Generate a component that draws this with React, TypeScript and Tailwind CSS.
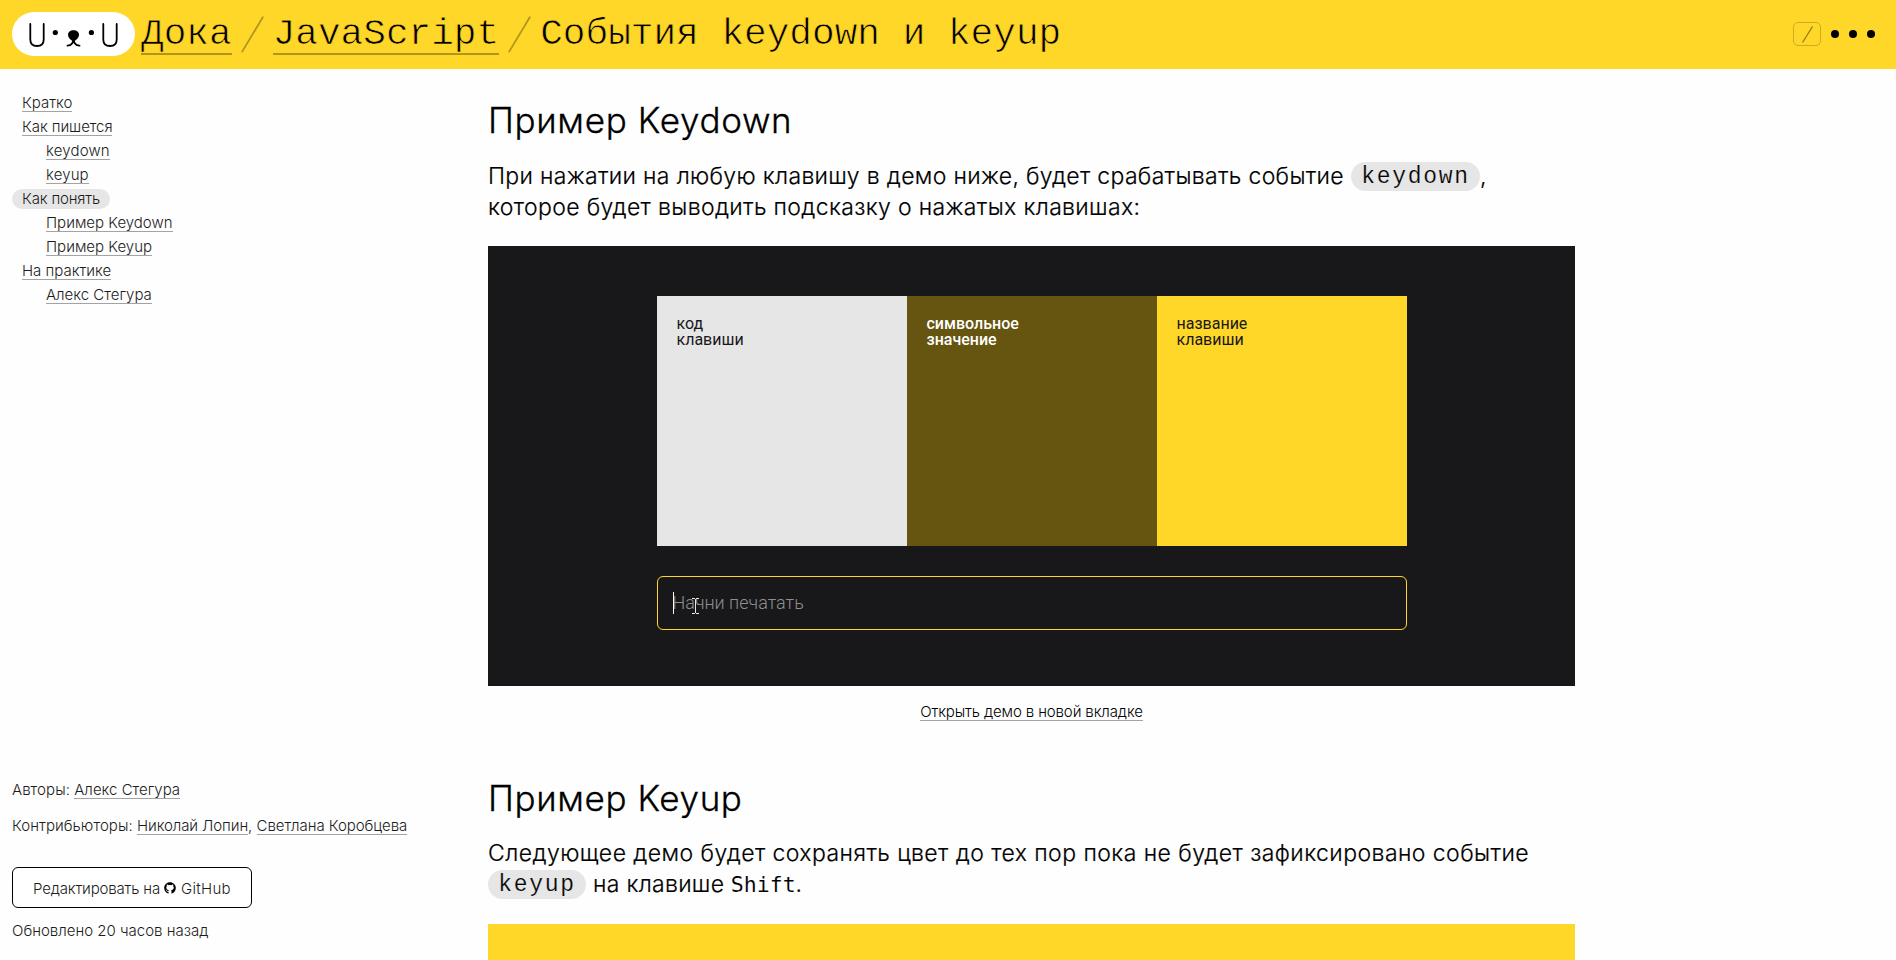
import type { ReactNode } from "react";
import { FaGithub } from "react-icons/fa";

type NavItem = { label: string; nested?: boolean; active?: boolean; tracking?: string };

const nav: NavItem[] = [
  { label: "Кратко" },
  { label: "Как пишется", tracking: "tracking-[-0.08px]" },
  { label: "keydown", nested: true, tracking: "tracking-[0.15px]" },
  { label: "keyup", nested: true, tracking: "tracking-[0.1px]" },
  { label: "Как понять", active: true, tracking: "tracking-[-0.16px]" },
  { label: "Пример Keydown", nested: true },
  { label: "Пример Keyup", nested: true },
  { label: "На практике" },
  { label: "Алекс Стегура", nested: true },
];

function Link({ children, className = "" }: { children: ReactNode; className?: string }) {
  return (
    <a className={`block h-[21px] border-b border-[#a3a3a3] leading-6 whitespace-nowrap ${className}`}>{children}</a>
  );
}

function Crumb({ children }: { children: ReactNode }) {
  return <a className="block h-[42px] border-b-2 border-[#b2961c] leading-[43px]">{children}</a>;
}

function Slash() {
  return (
    <svg className="mx-[9px] mt-[3px] h-[37px] w-[23px] shrink-0" viewBox="0 0 23 37" fill="none">
      <path d="M1.2 35.6 21.8 1.2" stroke="#b2961c" strokeWidth="1.8" strokeLinecap="round" />
    </svg>
  );
}

function Logo() {
  return (
    <svg className="mt-3 h-11 w-[123px] shrink-0" viewBox="0 0 123 44" fill="none">
      <rect width="123" height="44" rx="22" fill="#fff" />
      <g stroke="#000" strokeWidth="1.8" strokeLinecap="round">
        <path d="M18.3 12v15.5c0 4.200 2.500 6.500 6.700 6.500s6.700-2.300 6.700-6.500V12" />
        <path d="M91.300 12v15.500c0 4.200 2.500 6.500 6.700 6.500s6.700-2.300 6.700-6.500V12" />
        <path d="M61.500 26c0 4-1.800 7.500-6 7.700M61.500 26c0 4 1.800 7.500 6 7.700" />
      </g>
      <circle cx="43.300" cy="20.500" r="2.600" fill="#000" />
      <circle cx="79.400" cy="20.500" r="2.600" fill="#000" />
      <path d="M61.500 18.300c-3.400 0-5.500 1.900-5.500 4.500 0 2.800 2.700 5.300 5.500 6.700 2.800-1.400 5.500-3.900 5.500-6.700 0-2.600-2.100-4.500-5.500-4.500Z" fill="#000" />
    </svg>
  );
}

function Code({ children, className = "" }: { children: string; className?: string }) {
  return (
    <code
      className={`inline-block h-[29px] rounded-full bg-[#e6e6e6] text-center align-top font-['Liberation_Mono',monospace] text-[23px] leading-[30px] tracking-[1.7px] text-black [-webkit-text-stroke:0.2px_#e6e6e6] ${className}`}
    >
      {children}
    </code>
  );
}

function Tile({ children, className }: { children: ReactNode; className: string }) {
  return <div className={`size-[250px] pt-5 pl-5 text-base leading-4 ${className}`}>{children}</div>;
}

export default function App() {
  return (
    <div className="h-[960px] w-[1896px] overflow-hidden bg-[#fefefe] font-['Inter',sans-serif] font-light text-black">
      <header className="flex h-[69px] bg-[#ffd729] pl-3">
        <Logo />
        <div className="ml-1.5 flex pt-[13px] font-['Liberation_Mono',monospace] text-[37.75px] font-normal whitespace-pre [-webkit-text-stroke:0.75px_#ffd729]">
          <Crumb>Дока</Crumb>
          <Slash />
          <Crumb>JavaScript</Crumb>
          <Slash />
          <h1 className="leading-[43px]">События keydown и keyup</h1>
        </div>
        <div className="mt-[22px] ml-auto flex h-6 items-center pr-[21px]">
          <svg className="h-6 w-7" viewBox="0 0 28 24" fill="none">
            <rect x=".5" y=".5" width="27" height="23" rx="4.500" stroke="#ccac21" />
            <path d="M9.500 20.500 19.500 4.500" stroke="#8f7817" strokeWidth="1.300" />
          </svg>
          <div className="ml-2.5 flex gap-2.5">
            <i className="size-2 rounded-full bg-black" />
            <i className="size-2 rounded-full bg-black" />
            <i className="size-2 rounded-full bg-black" />
          </div>
        </div>
      </header>

      <div className="flex h-[891px]">
        <aside className="flex w-[488px] shrink-0 flex-col pt-[22px] pl-3 text-[15px] text-[#1c1c1c]">
          <nav>
            {nav.map((item) => (
              <div key={item.label} className={`flex h-6 ${item.active ? "" : item.nested ? "pl-[34px]" : "pl-2.5"}`}>
                {item.active ? (
                  <a className={`mt-0.5 h-5 rounded-full bg-[#e6e6e6] px-2.5 leading-5 ${item.tracking}`}>{item.label}</a>
                ) : (
                  <Link className={item.tracking}>{item.label}</Link>
                )}
              </div>
            ))}
          </nav>
          <div className="mt-[471px] flex h-6 leading-6 whitespace-pre">
            <span className="tracking-[0.06px]">Авторы: </span>
            <Link>Алекс Стегура</Link>
          </div>
          <div className="mt-3 flex h-6 leading-6 whitespace-pre">
            <span className="tracking-[0.05px]">Контрибьюторы: </span>
            <Link className="tracking-[-0.1px]">Николай Лопин</Link>
            <span>, </span>
            <Link className="tracking-[-0.05px]">Светлана Коробцева</Link>
          </div>
          <button className="mt-[29px] flex h-[41px] w-60 items-center rounded-md border border-black bg-white pt-1 pl-5 whitespace-nowrap">
            <span className="w-[131px] text-left tracking-[-0.16px]">Редактировать на</span>
            <FaGithub className="-mt-1 size-3 text-black" />
            <span className="ml-[5px] tracking-[0.3px]">GitHub</span>
          </button>
          <p className="mt-[11px] leading-6">Обновлено 20 часов назад</p>
        </aside>

        <main className="flex w-[1087px] flex-col pt-[30px]">
          <h2 className="text-[35px] leading-[42px] tracking-[0.65px] [-webkit-text-stroke:0.3px_#000]">Пример Keydown</h2>
          <p className="mt-5 h-[62px] text-[23px] leading-[31px] whitespace-nowrap [-webkit-text-stroke:0.2px_#000]">
            <span className="tracking-[0.33px]">При нажатии на любую клавишу в демо ниже, будет срабатывать событие</span>
            <Code className="mt-px ml-[7px] w-[129px]">keydown</Code>,
            <br />
            <span className="tracking-[0.35px]">которое будет выводить подсказку о нажатых клавишах:</span>
          </p>

          <section className="mt-[23px] flex h-[440px] shrink-0 flex-col items-center bg-[#18181a] pt-[50px] font-['Roboto',sans-serif]">
            <div className="flex w-[750px]">
              <Tile className="bg-[#e6e6e6] font-normal text-[#18181a]">код<br />клавиши</Tile>
              <Tile className="bg-[#665510] font-medium text-white">символьное<br />значение</Tile>
              <Tile className="bg-[#ffd729] font-normal text-[#18181a]">название<br />клавиши</Tile>
            </div>
            <div className="relative mt-[30px] flex h-[54px] w-[750px] items-center rounded-md border border-[#ffd729] pl-[15px] text-lg text-[#8f8f8f]">
              <span className="-mt-px">Начни печатать</span>
              <i className="absolute top-[15px] left-[15px] h-[22px] w-px bg-white" />
              <svg className="absolute top-[21px] left-[34px] h-4 w-[7px]" viewBox="0 0 7 16" fill="none" stroke="#e8e8e8">
                <path d="M0 .5h3M4 .5h3M3.500 1v14M0 15.500h3M4 15.500h3" />
              </svg>
            </div>
          </section>

          <div className="mt-3.5 flex h-6 justify-center text-[15px]">
            <Link className="tracking-[-0.12px]">Открыть демо в новой вкладке</Link>
          </div>

          <h2 className="mt-[53px] text-[35px] leading-[42px] tracking-[0.6px] [-webkit-text-stroke:0.3px_#000]">Пример Keyup</h2>
          <p className="mt-[19px] h-[62px] text-[23px] leading-[31px] whitespace-nowrap [-webkit-text-stroke:0.2px_#000]">
            <span className="tracking-[0.44px]">Следующее демо будет сохранять цвет до тех пор пока не будет зафиксировано событие</span>
            <br />
            <Code className="mt-px mr-[7px] w-[98px]">keyup</Code>
            <span className="tracking-[0.3px]">на клавише</span>{" "}
            <kbd className="font-['DejaVu_Sans_Mono',monospace] text-[21.5px] leading-none font-normal [-webkit-text-stroke:0.1px_#fefefe]">Shift</kbd>.
          </p>
          <section className="mt-6 h-9 shrink-0 bg-[#ffd729]" />
        </main>
      </div>
    </div>
  );
}
